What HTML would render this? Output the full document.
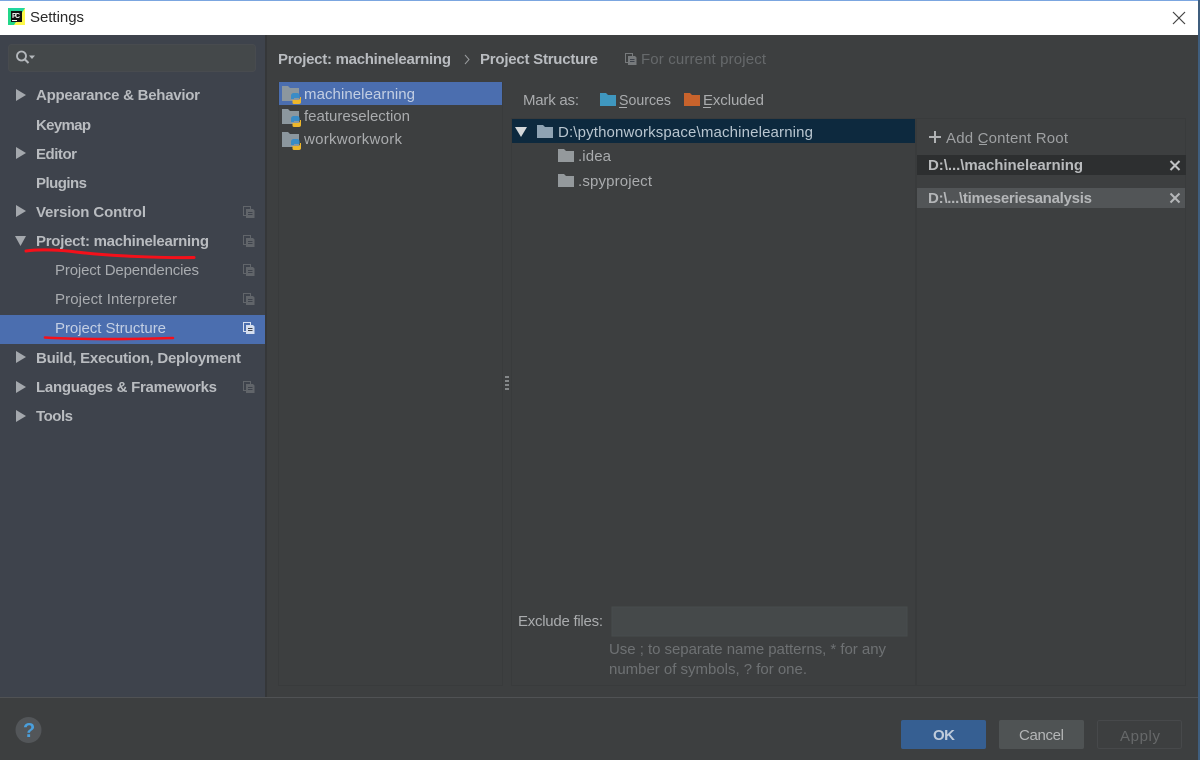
<!DOCTYPE html>
<html><head><meta charset="utf-8"><title>Settings</title>
<style>
html,body{margin:0;padding:0;width:1200px;height:760px;overflow:hidden;background:#3d3f40}
svg{display:block;filter:blur(.3px)}
text{font-family:"Liberation Sans",sans-serif;font-size:15px;fill:#bbbbbb}
.b{font-weight:bold;fill:#b9bcc0}
</style></head><body>
<svg width="1200" height="760" viewBox="0 0 1200 760" xmlns="http://www.w3.org/2000/svg">
<defs>
<g id="cp"><path d="M.5.500h7v9h-7z" fill="none" stroke="currentColor" stroke-width="1"/><path d="M3 3h7l1.500 1.500V12H3z" fill="currentColor"/><path d="M5 6.500h4.500M5 8.500h4.500" stroke="#3e434c" stroke-width="1"/></g>
<g id="pf"><path d="M0 1h6l2 2h9v13H0z" fill="#8c979e"/><path d="M9 11c0-2 1-3 3-3h3c1.500 0 2.500 1 2.500 2.500V13H12v1H9z" fill="#3a8cc6"/><path d="M18 12c0 0 0 0 0 0h1v5c0 1.500-1 2-2.500 2H12c-1 0-1.500-.5-1.500-1.500V15H16c1 0 2-1 2-3z" fill="#edb72c"/></g>
<path id="f" d="M0 0h6l2 2h8v11H0z"/>
<path id="ar" d="M0 0l10 6l-10 6z" fill="#a4a8ad"/>
</defs>

<rect width="1200" height="760" fill="#3d3f40"/>
<rect x="0" y="35" width="266" height="662" fill="#3e434c"/>
<rect x="265" y="35" width="2" height="662" fill="#353739"/>

<!-- title bar -->
<rect width="1198" height="35" fill="#ffffff"/>
<rect width="1200" height="1" fill="#7ba6e0"/>
<rect x="1198" y="0" width="2" height="760" fill="#3f5e7e"/>
<rect x="8" y="8" width="17" height="17" fill="#21d789"/>
<path d="M8 8h17v9z" fill="#21d7a0"/><path d="M25 8v17H14z" fill="#fcf84a"/>
<rect x="11" y="11" width="11" height="11" fill="#111"/>
<text x="12" y="18" style="font-size:7px;font-weight:bold;fill:#fff" textLength="8">PC</text>
<rect x="12" y="20" width="5" height="1" fill="#fff"/>
<text x="30" y="22" style="font-size:15px;fill:#2b2b2b" textLength="54">Settings</text>
<path d="M1173 12l12 12M1185 12l-12 12" stroke="#444" stroke-width="1.200"/>

<!-- search -->
<rect x="8.500" y="44.500" width="247" height="27" rx="3" fill="#44484a" stroke="#484b4f"/>
<circle cx="21.500" cy="56" r="4.500" fill="none" stroke="#b4b8bc" stroke-width="1.800"/>
<path d="M25 59.500l3.500 3.500" stroke="#b4b8bc" stroke-width="2"/>
<path d="M29 55.500h6l-3 3.500z" fill="#b4b8bc"/>

<!-- sidebar selection -->
<rect x="0" y="315" width="265" height="29" fill="#4b6eaf"/>

<!-- sidebar -->
<use href="#ar" x="16" y="89"/>
<text class="b" x="36" y="100" textLength="164">Appearance &amp; Behavior</text>
<text class="b" x="36" y="130" textLength="55">Keymap</text>
<use href="#ar" x="16" y="147"/>
<text class="b" x="36" y="159" textLength="41">Editor</text>
<text class="b" x="36" y="188" textLength="51">Plugins</text>
<use href="#ar" x="16" y="205"/>
<text class="b" x="36" y="217" textLength="110">Version Control</text>
<path d="M15 236h11l-5.500 10z" fill="#a4a8ad"/>
<text class="b" x="36" y="246" textLength="173">Project: machinelearning</text>
<text x="55" y="275" textLength="144" style="fill:#a9acb0">Project Dependencies</text>
<text x="55" y="304" textLength="122" style="fill:#a9acb0">Project Interpreter</text>
<text x="55" y="333" textLength="111" style="fill:#c3cfe3">Project Structure</text>
<use href="#ar" x="16" y="351"/>
<text class="b" x="36" y="363" textLength="205">Build, Execution, Deployment</text>
<use href="#ar" x="16" y="381"/>
<text class="b" x="36" y="392" textLength="181">Languages &amp; Frameworks</text>
<use href="#ar" x="16" y="410"/>
<text class="b" x="36" y="421" textLength="37">Tools</text>

<g color="#61656a">
<use href="#cp" x="243" y="206"/><use href="#cp" x="243" y="235"/><use href="#cp" x="243" y="264"/><use href="#cp" x="243" y="293"/><use href="#cp" x="243" y="381"/>
</g>
<use href="#cp" x="243" y="322" color="#d5deee"/>

<!-- red marks -->
<g fill="none" stroke="#f5101a" stroke-linecap="round">
<path d="M26 251C40 249 62 250 76 252C110 256 160 258 194 257.500" stroke-width="3"/>
<path d="M45 337.500C75 339.500 130 339.500 173 338" stroke-width="2.600"/>
<path d="M916 143C945 146 975 150 1000 151C1020 152 1045 151 1061 150.500" stroke-width="3"/>
</g>

<!-- header -->
<text class="b" x="278" y="64" textLength="173">Project: machinelearning</text>
<path d="M465 55l4 4.500l-4 4.500" fill="none" stroke="#9a9c9e" stroke-width="1"/>
<text class="b" x="480" y="64" textLength="118">Project Structure</text>
<use href="#cp" x="625" y="53" color="#777a7c"/>
<text x="641" y="64" textLength="125" style="fill:#66696b">For current project</text>

<!-- module list panel -->
<rect x="278.500" y="82.500" width="224" height="603" fill="#3d3f40" stroke="#393b3c"/>
<rect x="279" y="82" width="223" height="23" fill="#4b6eaf"/>
<use href="#pf" x="282" y="85"/><use href="#pf" x="282" y="108"/><use href="#pf" x="282" y="131"/>
<text x="304" y="99" textLength="111" style="fill:#c3cfe3">machinelearning</text>
<text x="304" y="121" textLength="106" style="fill:#aaacae">featureselection</text>
<text x="304" y="144" textLength="98" style="fill:#aaacae">workworkwork</text>

<!-- splitter -->
<g fill="#85888a"><rect x="505" y="376" width="4" height="2"/><rect x="505" y="380" width="4" height="2"/><rect x="505" y="384" width="4" height="2"/><rect x="505" y="388" width="4" height="2"/></g>

<!-- mark as -->
<text x="523" y="105" textLength="56" style="fill:#aaacae">Mark as:</text>
<use href="#f" x="600" y="93" fill="#3f97bf"/>
<text x="619" y="105" textLength="52" lengthAdjust="spacingAndGlyphs" style="fill:#aaacae">Sources</text>
<rect x="619" y="107" width="8" height="1" fill="#aaacae"/>
<use href="#f" x="684" y="93" fill="#c8632c"/>
<text x="703" y="105" textLength="61" style="fill:#aaacae">Excluded</text>
<rect x="703" y="107" width="8" height="1" fill="#aaacae"/>

<!-- tree panel -->
<rect x="511.500" y="118.500" width="404" height="567" fill="#3d3f40" stroke="#393b3c"/>
<rect x="512" y="119" width="403" height="24" fill="#0d293e"/>
<path d="M515 127h12l-6 10z" fill="#d5d8da"/>
<use href="#f" x="537" y="125" fill="#8fa3b3"/>
<text x="558" y="137" textLength="255" style="fill:#b9c6d0">D:\pythonworkspace\machinelearning</text>
<use href="#f" x="558" y="149" fill="#94999c"/>
<text x="578" y="161" textLength="33" style="fill:#aaacae">.idea</text>
<use href="#f" x="558" y="174" fill="#94999c"/>
<text x="578" y="186" textLength="74" style="fill:#aaacae">.spyproject</text>

<!-- exclude -->
<text x="518" y="626" textLength="85" style="fill:#aaacae">Exclude files:</text>
<rect x="612" y="607" width="295" height="29" fill="#45494a" stroke="#484c4d"/>
<text x="609" y="654" textLength="277" style="fill:#6e7173">Use ; to separate name patterns, * for any</text>
<text x="609" y="674" textLength="198" style="fill:#6e7173">number of symbols, ? for one.</text>

<!-- right panel -->
<rect x="916.500" y="118.500" width="269" height="567" fill="#3d3f40" stroke="#393b3c"/>
<path d="M929 137h12M935 131v12" stroke="#b0b2b4" stroke-width="2"/>
<text x="946" y="143" textLength="122" style="fill:#9fa1a3">Add Content Root</text>
<rect x="979" y="144" width="8" height="1" fill="#9fa1a3"/>
<rect x="917" y="155" width="269" height="20" fill="#2d2f30"/>
<text class="b" x="928" y="170" textLength="155" style="fill:#b9bbbd">D:\...\machinelearning</text>
<path d="M1170.500 161l9 9M1179.500 161l-9 9" stroke="#c0c2c4" stroke-width="2"/>
<rect x="917" y="188" width="268" height="20" fill="#525557"/>
<text class="b" x="928" y="203" textLength="164" style="fill:#b4b6b8">D:\...\timeseriesanalysis</text>
<path d="M1170.500 193.500l9 9M1179.500 193.500l-9 9" stroke="#b5b7b9" stroke-width="2"/>

<!-- footer -->
<rect x="0" y="697" width="1198" height="1" fill="#505254"/>
<circle cx="28.500" cy="730" r="13" fill="#535659"/>
<text x="23" y="737" style="font-size:20px;font-weight:bold;fill:#4a9fdc">?</text>
<rect x="901" y="720" width="85" height="29" rx="2" fill="#365f92"/>
<text x="933" y="740" textLength="22" style="font-weight:bold;fill:#c0ccdb">OK</text>
<rect x="999" y="720" width="85" height="29" rx="2" fill="#4f5354"/>
<text x="1019" y="740" textLength="45" style="fill:#b4b6b7">Cancel</text>
<rect x="1097.500" y="720.500" width="84" height="28" rx="2" fill="none" stroke="#47494b"/>
<text x="1120" y="741" textLength="40" style="fill:#666869">Apply</text>
</svg>
</body></html>
